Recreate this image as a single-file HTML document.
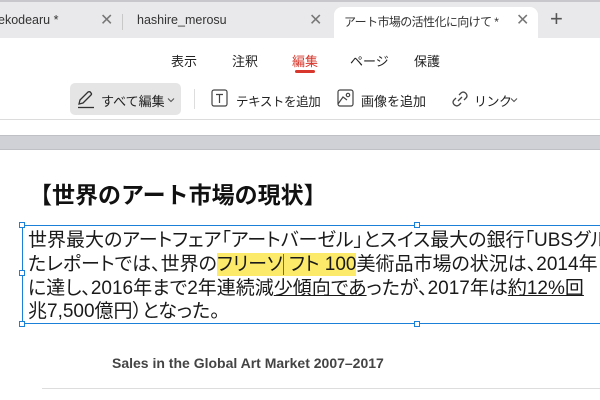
<!DOCTYPE html>
<html><head><meta charset="utf-8"><style>
*{margin:0;padding:0;box-sizing:border-box}
html,body{width:600px;height:400px;overflow:hidden}
body{background:#fff;font-family:"Liberation Sans","Noto Sans CJK JP",sans-serif;position:relative;color:#222}
.abs{position:absolute;white-space:nowrap}
#tabs{position:absolute;left:0;top:0;width:600px;height:38px;background:#e9e9eb;border-top:2px solid #c8c8cc}
.tab{position:absolute;top:11px;font-size:12.5px;color:#333;white-space:nowrap}
.x{position:absolute;top:8px;font-size:16px;color:#777}
#active{position:absolute;left:334px;top:5px;width:204px;height:34px;background:#fff;border-radius:8px 8px 0 0}
.menu{position:absolute;top:51px;font-size:13px;color:#222}
.tb{position:absolute;top:91px;font-size:13px;color:#222;white-space:nowrap}
#clip{position:absolute;left:0;top:0;width:600px;height:400px;overflow:hidden}
.line{position:absolute;white-space:nowrap;font-size:19px;line-height:28px;left:28px;color:#1a1a1a;font-feature-settings:"palt"}
.h{position:absolute;width:6px;height:6px;border:1px solid #1a80d8;background:#fff}
</style></head><body>
<div id="clip">
<div id="tabs">
<div class="tab" style="left:-2px">ekodearu *</div>
<div class="x" style="left:100px">✕</div>
<div style="position:absolute;left:122px;top:12px;width:1px;height:16px;background:#c8c8c8"></div>
<div class="tab" style="left:137px">hashire_merosu</div>
<div class="x" style="left:309px">✕</div>
<div id="active"></div>
<div class="tab" style="left:344px;font-size:12px;letter-spacing:-0.6px">アート市場の活性化に向けて *</div>
<div class="x" style="left:516px">✕</div>
<div class="abs" style="left:550px;top:4px;font-size:22px;color:#555">+</div>
</div>
<div class="menu" style="left:171px">表示</div>
<div class="menu" style="left:232px">注釈</div>
<div class="menu" style="left:292px;color:#d7372c">編集</div>
<div style="position:absolute;left:295px;top:70px;width:20px;height:3px;background:#d7372c;border-radius:2px"></div>
<div class="menu" style="left:350px">ページ</div>
<div class="menu" style="left:414px">保護</div>
<div style="position:absolute;left:70px;top:83px;width:111px;height:32px;background:#e5e5e5;border-radius:5px"></div>
<svg class="abs" style="left:76px;top:89px" width="20" height="20" viewBox="0 0 20 20" fill="none" stroke="#333" stroke-width="1.3"><path d="M3 15 L4 11 L12 3 Q14 2 15 4 Q16 5 15 6 L7 14 Z"/><path d="M2 18.5 H18"/></svg>
<div class="tb" style="left:101px">すべて編集</div>
<svg class="abs" style="left:167px;top:97px" width="8" height="6" viewBox="0 0 8 6" fill="none" stroke="#555" stroke-width="1.1"><path d="M1 1.5 L4 4.5 L7 1.5"/></svg>
<div style="position:absolute;left:194px;top:89px;width:1px;height:20px;background:#ddd"></div>
<svg class="abs" style="left:211px;top:89px" width="18" height="19" viewBox="0 0 18 19" fill="none" stroke="#444" stroke-width="1.2"><rect x="1" y="1" width="15" height="16" rx="2"/><path d="M5 5.5 H12 M8.5 5.5 V14"/></svg>
<div class="tb" style="left:236px;font-size:12.5px;letter-spacing:-0.4px">テキストを追加</div>
<svg class="abs" style="left:337px;top:89px" width="18" height="19" viewBox="0 0 18 19" fill="none" stroke="#444" stroke-width="1.2"><rect x="1" y="1" width="15" height="16" rx="2"/><path d="M1 15 L6 8 L10 11"/><circle cx="11" cy="6" r="1.7"/></svg>
<div class="tb" style="left:361px">画像を追加</div>
<svg class="abs" style="left:450px;top:89px" width="20" height="20" viewBox="0 0 20 20" fill="none" stroke="#444" stroke-width="1.3"><path d="M8 12 L12 8"/><path d="M9 6 L11 4 Q13.5 2 16 4.5 Q18 7 16 9 L14 11"/><path d="M11 14 L9 16 Q6.5 18 4 15.5 Q2 13 4 11 L6 9"/></svg>
<div class="tb" style="left:474px;letter-spacing:-0.5px">リンク</div>
<svg class="abs" style="left:510px;top:97px" width="8" height="6" viewBox="0 0 8 6" fill="none" stroke="#555" stroke-width="1.1"><path d="M1 1.5 L4 4.5 L7 1.5"/></svg>
<div style="position:absolute;left:0;top:119px;width:600px;height:1px;background:#dcdcdc"></div>
<div style="position:absolute;left:0;top:135px;width:600px;height:15px;background:#d0d1d6;border-top:1px solid #bfc0c6;border-bottom:1px solid #bfc0c6"></div>
<div class="abs" style="left:29px;top:178px;font-size:23px;line-height:35px;font-weight:bold;color:#111">【世界のアート市場の現状】</div>
<div style="position:absolute;left:22px;top:225px;width:590px;height:99px;border:1px solid #1a80d8"></div>
<div class="h" style="left:19px;top:222px"></div>
<div class="h" style="left:414px;top:222px"></div>
<div class="h" style="left:19px;top:270px"></div>
<div class="h" style="left:19px;top:321px"></div>
<div class="h" style="left:414px;top:321px"></div>
<div class="line" style="top:227px">世界最大のアートフェア「アートバーゼル」とスイス最大の銀行「UBSグループ」</div>
<div class="line" style="top:251px">たレポートでは、世界の<span style="background:#fcea6a;padding:1px 0">フリーソ<span style="border-left:1px solid #1a80d8"> </span>フト 100</span>美術品市場の状況は、2014年</div>
<div class="line" style="top:275px">に達し、2016年まで2年連続減<span style="text-decoration:underline">少傾向であ</span>ったが、2017年は<span style="text-decoration:underline">約12%回</span></div>
<div class="line" style="top:298px">兆7,500億円）となった。</div>
<div class="abs" style="left:112px;top:355px;font-size:14px;font-weight:bold;color:#444">Sales in the Global Art Market 2007–2017</div>
<div style="position:absolute;left:42px;top:388px;width:558px;height:1px;background:#ddd"></div>
</div>
</body></html>
